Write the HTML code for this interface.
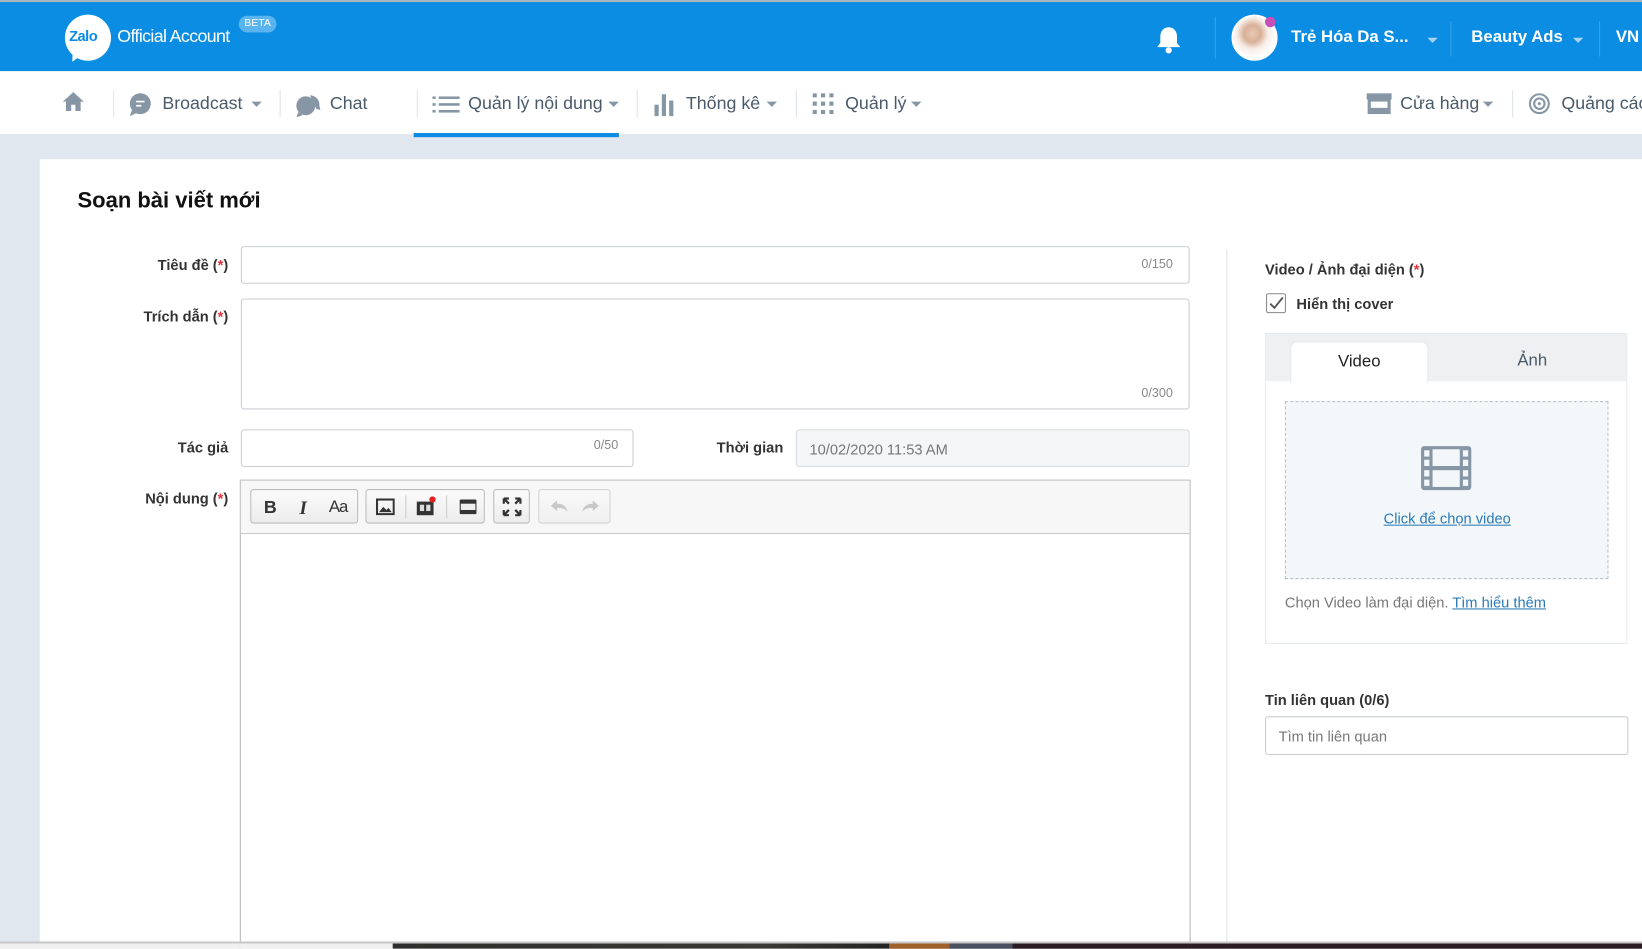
<!DOCTYPE html>
<html><head><meta charset="utf-8"><style>
*{box-sizing:border-box;margin:0;padding:0}
html,body{width:1642px;height:948px;overflow:hidden;background:#fff}
#w{position:absolute;left:0;top:0;width:1568px;height:906px;transform:scale(1.04719);transform-origin:0 0;font-family:"Liberation Sans",Arial,sans-serif;background:#e1e7ee;overflow:hidden}
.a{position:absolute;white-space:nowrap}
.top{left:0;top:0;width:1568px;height:68px;background:#0a8de2;border-top:2px solid #a9b6c0}
.wt{color:#fff;font-weight:bold;font-size:16px}
.nav{left:0;top:68px;width:1568px;height:60px;background:#fff}
.nt{font-size:17px;color:#4a5a6a;top:21px}
.car{width:0;height:0;border-left:5px solid transparent;border-right:5px solid transparent;border-top:5px solid #8796a5}
.vd{width:1px;height:26px;background:#dde3e8;top:18px}
.card{left:38px;top:152px;width:1540px;height:760px;background:#fff}
.lb{font-size:14px;font-weight:bold;color:#333;text-align:right;width:180px}
.r{color:#e0323c}
.in{border:1px solid #c9cdd2;border-radius:3px;background:#fff}
.cnt{font-size:12px;color:#888}
.btn{border:1px solid #bcbcbc;border-radius:3px;background:linear-gradient(#fbfbfb,#ececec);height:33px;top:8px}
.sep{width:1px;height:22px;background:#ccc;top:5px}
</style></head><body><div id="w">
<div class="a top">
 <div class="a" style="left:62px;top:12px;width:44px;height:44px;border-radius:50%;background:#fff"></div>
 <div class="a" style="left:67px;top:46px;width:0;height:0;border-left:4px solid transparent;border-right:8px solid transparent;border-top:12px solid #fff;transform:rotate(20deg)"></div>
 <div class="a" style="left:66px;top:24px;font-size:14px;font-weight:bold;color:#0a8de2;letter-spacing:-0.5px">Zalo</div>
 <div class="a" style="left:112px;top:23px;font-size:17px;color:#fff;letter-spacing:-0.6px">Official Account</div>
 <div class="a" style="left:228px;top:13px;width:36px;height:16px;border-radius:8px;background:#5ab4ef;color:#fff;font-size:10px;text-align:center;line-height:16px">BETA</div>
 <svg class="a" style="left:1103px;top:22px" width="26" height="28" viewBox="0 0 26 28"><path d="M13 2c-5 0-8 4-8 9v6l-3 4h22l-3-4v-6c0-5-3-9-8-9z" fill="#fff"/><circle cx="13" cy="24" r="3" fill="#fff"/></svg>
 <div class="a" style="left:1160px;top:14px;width:1px;height:40px;background:#3aa2e8"></div>
 <div class="a" style="left:1176px;top:12px;width:44px;height:44px;border-radius:50%;background:radial-gradient(circle at 45% 40%,#e9c9b4 0,#d9b098 25%,#f6ece6 45%,#fff 70%);border:2px solid #fff"></div>
 <div class="a" style="left:1208px;top:14px;width:10px;height:10px;border-radius:50%;background:#c94fb8"></div>
 <div class="a wt" style="left:1233px;top:25px">Trẻ Hóa Da S...</div>
 <div class="a car" style="left:1363px;top:34px;border-top-color:#a8d3f3"></div>
 <div class="a" style="left:1385px;top:18px;width:1px;height:34px;background:#3aa2e8"></div>
 <div class="a wt" style="left:1405px;top:25px">Beauty Ads</div>
 <div class="a car" style="left:1502px;top:34px;border-top-color:#a8d3f3"></div>
 <div class="a" style="left:1527px;top:18px;width:1px;height:34px;background:#3aa2e8"></div>
 <div class="a wt" style="left:1543px;top:25px">VN</div>
</div>
<div class="a nav">
 <svg class="a" style="left:59px;top:19px" width="22" height="20" viewBox="0 0 22 20"><path d="M11 1L1 10h3v9h5v-6h4v6h5v-9h3z" fill="#8796a5"/></svg>
 <div class="a vd" style="left:108px"></div>
 <svg class="a" style="left:122px;top:20px" width="24" height="24" viewBox="0 0 24 24"><circle cx="12" cy="11" r="10" fill="#8796a5"/><path d="M4 17l-2 6 6-3z" fill="#8796a5"/><path d="M8 9h8M8 13h5" stroke="#fff" stroke-width="1.6"/></svg>
 <div class="a nt" style="left:155px">Broadcast</div><div class="a car" style="left:240px;top:29px"></div>
 <div class="a vd" style="left:267px"></div>
 <svg class="a" style="left:281px;top:19px" width="26" height="26" viewBox="0 0 26 26"><circle cx="11" cy="14" r="9" fill="#8796a5"/><path d="M4 20l-2 5 6-2z" fill="#8796a5"/><path d="M15 4a9 9 0 0 1 9 10l1 4-4-1" fill="#8796a5"/></svg>
 <div class="a nt" style="left:315px">Chat</div>
 <div class="a vd" style="left:398px"></div>
 <svg class="a" style="left:413px;top:24px" width="26" height="16" viewBox="0 0 26 16"><g fill="#8796a5"><rect x="0" y="0" width="3" height="2.5"/><rect x="0" y="6.5" width="3" height="2.5"/><rect x="0" y="13" width="3" height="2.5"/><rect x="6" y="0" width="20" height="2.5"/><rect x="6" y="6.5" width="20" height="2.5"/><rect x="6" y="13" width="20" height="2.5"/></g></svg>
 <div class="a nt" style="left:447px">Quản lý nội dung</div><div class="a car" style="left:581px;top:29px"></div>
 <div class="a" style="left:395px;top:59px;width:196px;height:4px;background:#0a8de2"></div>
 <div class="a vd" style="left:608px"></div>
 <svg class="a" style="left:624px;top:19px" width="22" height="24" viewBox="0 0 22 24"><g fill="#8796a5"><rect x="1" y="13" width="4" height="11"/><rect x="8" y="3" width="4" height="21"/><rect x="15" y="9" width="4" height="15"/></g></svg>
 <div class="a nt" style="left:655px">Thống kê</div><div class="a car" style="left:732px;top:29px"></div>
 <div class="a vd" style="left:760px"></div>
 <svg class="a" style="left:776px;top:21px" width="20" height="20" viewBox="0 0 20 20"><g fill="#8796a5"><rect x="0" y="0" width="4" height="4"/><rect x="8" y="0" width="4" height="4"/><rect x="16" y="0" width="4" height="4"/><rect x="0" y="8" width="4" height="4"/><rect x="8" y="8" width="4" height="4"/><rect x="16" y="8" width="4" height="4"/><rect x="0" y="16" width="4" height="4"/><rect x="8" y="16" width="4" height="4"/><rect x="16" y="16" width="4" height="4"/></g></svg>
 <div class="a nt" style="left:807px">Quản lý</div><div class="a car" style="left:870px;top:29px"></div>
 <svg class="a" style="left:1305px;top:21px" width="24" height="20" viewBox="0 0 24 20"><rect x="0" y="0" width="24" height="6" fill="#8796a5"/><rect x="1" y="6" width="22" height="14" fill="#8796a5"/><rect x="4" y="8" width="16" height="6" fill="#fff"/></svg>
 <div class="a nt" style="left:1337px">Cửa hàng</div><div class="a car" style="left:1416px;top:29px"></div>
 <div class="a vd" style="left:1444px"></div>
 <svg class="a" style="left:1459px;top:20px" width="22" height="22" viewBox="0 0 22 22"><circle cx="11" cy="11" r="9" fill="none" stroke="#8796a5" stroke-width="2"/><circle cx="11" cy="11" r="5" fill="none" stroke="#8796a5" stroke-width="2"/><circle cx="11" cy="11" r="1.5" fill="#8796a5"/></svg>
 <div class="a nt" style="left:1491px">Quảng cáo</div>
</div>
<div class="a card">
 <div class="a" style="left:36px;top:28px;font-size:21px;font-weight:bold;color:#111">Soạn bài viết mới</div>
 <div class="a lb" style="left:0;top:93px">Tiêu đề (<span class="r">*</span>)</div>
 <div class="a in" style="left:192px;top:83px;width:906px;height:36px"></div>
 <div class="a cnt" style="left:1052px;top:93px">0/150</div>
 <div class="a lb" style="left:0;top:142px">Trích dẫn (<span class="r">*</span>)</div>
 <div class="a in" style="left:192px;top:133px;width:906px;height:106px"></div>
 <div class="a cnt" style="left:1052px;top:216px">0/300</div>
 <div class="a lb" style="left:0;top:267px">Tác giả</div>
 <div class="a in" style="left:192px;top:258px;width:375px;height:36px"></div>
 <div class="a cnt" style="left:529px;top:266px">0/50</div>
 <div class="a lb" style="left:530px;top:267px">Thời gian</div>
 <div class="a in" style="left:722px;top:258px;width:376px;height:36px;background:#f4f5f6;border-color:#d8dbde;font-size:14px;color:#777;padding:10px 12px">10/02/2020 11:53 AM</div>
 <div class="a lb" style="left:0;top:316px">Nội dung (<span class="r">*</span>)</div>
 <div class="a" style="left:191px;top:306px;width:908px;height:460px;border:1px solid #b8b8b8;background:#fff">
  <div class="a" style="left:0;top:0;width:906px;height:51px;background:#f7f7f7;border-bottom:1px solid #c8c8c8">
   <div class="a btn" style="left:9px;width:103px"><span class="a" style="left:12px;top:7px;font-weight:bold;font-size:17px;color:#333">B</span><span class="a" style="left:46px;top:7px;font-style:italic;font-weight:bold;font-family:'Liberation Serif',serif;font-size:18px;color:#333">I</span><span class="a" style="left:74px;top:8px;font-size:16px;color:#333;letter-spacing:-1px">Aa</span></div>
   <div class="a btn" style="left:119px;width:114px">
    <svg class="a" style="left:9px;top:8px" width="18" height="16" viewBox="0 0 18 16"><rect x="1" y="1" width="16" height="14" fill="none" stroke="#333" stroke-width="2"/><path d="M3 13l4-5 3 3 2-2 3 4z" fill="#333"/></svg>
    <div class="a sep" style="left:37px"></div>
    <svg class="a" style="left:47px;top:6px" width="20" height="19" viewBox="0 0 20 19"><rect x="1" y="5" width="16" height="13" fill="#333"/><rect x="4" y="8" width="4" height="6" fill="#ddd"/><rect x="10" y="8" width="4" height="6" fill="#ddd"/><circle cx="16" cy="3" r="3" fill="#e02020"/></svg>
    <div class="a sep" style="left:76px"></div>
    <svg class="a" style="left:88px;top:8px" width="18" height="16" viewBox="0 0 18 16"><rect x="1" y="1" width="16" height="14" rx="1" fill="#333"/><rect x="2" y="5" width="14" height="6" fill="#eee"/></svg>
   </div>
   <div class="a btn" style="left:241px;width:35px"><svg class="a" style="left:8px;top:7px" width="18" height="18" viewBox="0 0 18 18"><path d="M1 1h5M1 1v5M1 1l5 5M17 1h-5M17 1v5M17 1l-5 5M1 17h5M1 17v-5M1 17l5-5M17 17h-5M17 17v-5M17 17l-5-5" stroke="#333" stroke-width="2.2" fill="none"/></svg></div>
   <div class="a btn" style="left:284px;width:69px;opacity:.6"><svg class="a" style="left:10px;top:9px" width="48" height="14" viewBox="0 0 48 14"><path d="M1 6l6-5v3c5 0 9 2 10 8-2-3-5-4-10-4v3z" fill="#aaa"/><path d="M47 6l-6-5v3c-5 0-9 2-10 8 2-3 5-4 10-4v3z" fill="#aaa"/></svg></div>
  </div>
 </div>
 <div class="a" style="left:1133px;top:86px;width:1px;height:700px;background:#e3e6e9"></div>
 <div class="a" style="left:1170px;top:97px;font-size:14px;font-weight:bold;color:#333">Video / Ảnh đại diện (<span class="r">*</span>)</div>
 <div class="a" style="left:1171px;top:128px;width:19px;height:19px;border:1px solid #888;border-radius:2px"><svg class="a" style="left:2px;top:2px" width="14" height="13" viewBox="0 0 14 13"><path d="M1 7l4 4 8-10" stroke="#555" stroke-width="1.8" fill="none"/></svg></div>
 <div class="a" style="left:1200px;top:130px;font-size:14px;font-weight:bold;color:#333">Hiển thị cover</div>
 <div class="a" style="left:1170px;top:166px;width:346px;height:297px;border:1px solid #e8ebee;background:#fff">
  <div class="a" style="left:0;top:0;width:344px;height:45px;background:#eef0f2"></div>
  <div class="a" style="left:23px;top:7px;width:132px;height:40px;background:#fff;border-radius:6px 6px 0 0;border:1px solid #e3e6e9;border-bottom:none;font-size:16px;text-align:center;line-height:38px;color:#222">Video</div>
  <div class="a" style="left:240px;top:17px;font-size:16px;color:#4a5a6a">Ảnh</div>
  <div class="a" style="left:18px;top:64px;width:309px;height:170px;border:1px dashed #b8c0c8;background:#f4f7fa"></div>
  <svg class="a" style="left:147px;top:106px" width="50" height="44" viewBox="0 0 50 44"><rect x="1" y="1" width="48" height="42" rx="3" fill="#8796a5"/><rect x="12" y="4" width="26" height="16" fill="#f4f7fa"/><rect x="12" y="24" width="26" height="16" fill="#f4f7fa"/><g fill="#f4f7fa"><rect x="4" y="5" width="5" height="6"/><rect x="4" y="14" width="5" height="6"/><rect x="4" y="24" width="5" height="6"/><rect x="4" y="33" width="5" height="6"/><rect x="41" y="5" width="5" height="6"/><rect x="41" y="14" width="5" height="6"/><rect x="41" y="24" width="5" height="6"/><rect x="41" y="33" width="5" height="6"/></g></svg>
  <div class="a" style="left:0;top:168px;width:346px;text-align:center;font-size:14px;color:#2a7ab8;text-decoration:underline">Click để chọn video</div>
  <div class="a" style="left:18px;top:248px;font-size:14px;color:#777">Chọn Video làm đại diện. <span style="color:#2a7ab8;text-decoration:underline">Tìm hiểu thêm</span></div>
 </div>
 <div class="a" style="left:1170px;top:508px;font-size:14px;font-weight:bold;color:#333">Tin liên quan (0/6)</div>
 <div class="a in" style="left:1170px;top:532px;width:347px;height:37px;font-size:14px;color:#777;padding:10px 12px">Tìm tin liên quan</div>
</div>
<div class="a" style="left:0;top:899px;width:1568px;height:2px;background:#c8c8c8"></div>
<div class="a" style="left:0;top:901px;width:375px;height:5px;background:#f0f0f0"></div>
<div class="a" style="left:375px;top:901px;width:1193px;height:5px;background:linear-gradient(90deg,#2e2e2e,#3a3833 30%,#222 40%,#222 50%)"></div>
<div class="a" style="left:849px;top:901px;width:58px;height:5px;background:#a0602a"></div>
<div class="a" style="left:907px;top:901px;width:60px;height:5px;background:#4a5060"></div>
<div class="a" style="left:967px;top:901px;width:601px;height:5px;background:#2a1c22"></div>
</div></body></html>
